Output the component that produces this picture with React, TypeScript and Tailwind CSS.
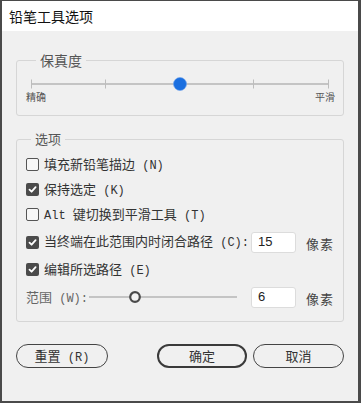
import React from "react";

const cjk = "font-['Noto_Sans_CJK_SC',sans-serif]";

// half-width latin runs like the original dialog font
function Mixed({ text }: { text: string }) {
  const parts = text.split(/([\x00-\x7f]+)/).filter(Boolean);
  return (
    <>
      {parts.map((p, i) =>
        /^[\x00-\x7f]+$/.test(p) ? (
          <span key={i} className="whitespace-pre font-['Liberation_Mono',monospace] text-[12px]">
            {p}
          </span>
        ) : (
          <span key={i} className={cjk}>
            {p}
          </span>
        )
      )}
    </>
  );
}

function CheckBox({ checked }: { checked?: boolean }) {
  if (checked) {
    return (
      <span className="flex h-[13px] w-[13px] shrink-0 items-center justify-center rounded-[2px] bg-[#4b4b4b]">
        <svg width="9" height="9" viewBox="0 0 9 9" fill="none">
          <path d="M1.5 4.6 L3.6 6.7 L7.6 2.2" stroke="#fff" strokeWidth="1.8" strokeLinecap="round" strokeLinejoin="round" />
        </svg>
      </span>
    );
  }
  return <span className="h-[13px] w-[13px] shrink-0 rounded-[2px] border border-[#555] bg-[#f7f7f7]" />;
}

function NumberBox({ value }: { value: string }) {
  return (
    <div className="flex shrink-0 items-center gap-[10px]">
      <div className="h-[21px] w-[45px] rounded-[3px] border border-[#dcdcdc] bg-white pl-[6px] font-['Liberation_Sans',sans-serif] text-[13px] leading-[17px] text-[#222]">
        {value}
      </div>
      <span className={`${cjk} mt-[4px] whitespace-nowrap text-[13px] tracking-[1px] text-[#444]`}>像素</span>
    </div>
  );
}

function Option({ checked, label, children, h = "h-[25px]" }: { checked?: boolean; label: string; children?: React.ReactNode; h?: string }) {
  return (
    <div className={`flex items-center ${h}`}>
      <CheckBox checked={checked} />
      <span className="ml-[5px] whitespace-nowrap text-[13px] leading-[16px] text-[#333]">
        <Mixed text={label} />
      </span>
      {children && <div className="ml-auto">{children}</div>}
    </div>
  );
}

export default function App() {
  return (
    <div className="flex h-[403px] w-[361px] flex-col border-t border-l-2 border-r-[3px] border-b-2 border-[#4a4a4a] bg-[#f0f0f0]">
      <div className={`${cjk} flex h-[30px] shrink-0 items-center bg-white pl-[7px] text-[14px] text-[#111]`}>
        铅笔工具选项
      </div>

      <div className="flex flex-1 flex-col px-[14px] pt-[21px]">
        <fieldset className="rounded-[3px] border border-[#d6d6d6] px-[14px] pb-[12px]">
          <legend className={`${cjk} ml-[5px] px-[4px] text-[14px] leading-[16px] text-[#555]`}>保真度</legend>
          <div className="mt-[9px]">
            <svg width="298" height="14" viewBox="0 0 298 14" className="block">
              <line x1="0" y1="7" x2="298" y2="7" stroke="#c4c4c4" strokeWidth="2" />
              {[0.5, 74.5, 222.5, 297.5].map((x) => (
                <line key={x} x1={x} y1="2.5" x2={x} y2="11.5" stroke="#bdbdbd" strokeWidth="1" />
              ))}
              <circle cx="149" cy="7" r="6.5" fill="#1b6fe0" stroke="#6aa0ec" strokeWidth="0.6" />
            </svg>
            <div className={`${cjk} flex justify-between text-[10px] leading-[12px] text-[#555]`}>
              <span className="-ml-[5px]">精确</span>
              <span className="-mr-[6px]">平滑</span>
            </div>
          </div>
        </fieldset>

        <fieldset className="mt-[15px] rounded-[3px] border border-[#d6d6d6] pl-[9px] pr-[9px] pt-[5px] pb-[9px]">
          <legend className={`${cjk} ml-[5px] px-[4px] text-[13px] leading-[16px] text-[#555]`}>选项</legend>
          <Option label="填充新铅笔描边 (N)" />
          <Option checked label="保持选定 (K)" />
          <Option label="Alt 键切换到平滑工具 (T)" />
          <Option checked label="当终端在此范围内时闭合路径 (C):" h="h-[30px]">
            <NumberBox value="15" />
          </Option>
          <Option checked label="编辑所选路径 (E)" />
          <div className="flex h-[30px] items-center">
            <span className="whitespace-nowrap text-[13px] text-[#666]">
              <Mixed text="范围 (W):" />
            </span>
            <svg width="148" height="14" viewBox="0 0 148 14" className="ml-[1px] shrink-0">
              <line x1="0" y1="7" x2="148" y2="7" stroke="#c4c4c4" strokeWidth="2" />
              <circle cx="46" cy="7" r="4.8" fill="#f4f4f4" stroke="#4a4a4a" strokeWidth="2.2" />
            </svg>
            <div className="ml-auto">
              <NumberBox value="6" />
            </div>
          </div>
        </fieldset>

        <div className="mt-[22px] flex text-[13px] text-[#333]">
          <button className="h-[24px] w-[92px] rounded-full border border-[#444] bg-[#f0f0f0]">
            <Mixed text="重置 (R)" />
          </button>
          <button className={`${cjk} ml-[49px] h-[24px] w-[90px] rounded-full border-2 border-[#3a3a3a] bg-[#f0f0f0]`}>确定</button>
          <button className={`${cjk} ml-[6px] h-[24px] w-[91px] rounded-full border border-[#444] bg-[#f0f0f0]`}>取消</button>
        </div>
      </div>
    </div>
  );
}
